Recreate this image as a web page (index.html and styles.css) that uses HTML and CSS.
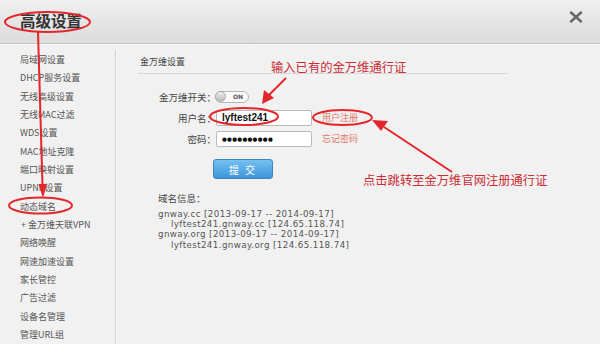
FILE: index.html
```html
<!DOCTYPE html>
<html lang="zh-CN">
<head>
  <meta charset="UTF-8">
  <title>高级设置</title>
  <link rel="stylesheet" href="styles.css">
</head>
<body>
  <div id="dialog">
    <div id="header">
      <h1>高级设置</h1>
      <svg class="close" width="14" height="12" viewBox="0 0 14 12">
        <path d="M2 1.5 L12 10.5 M12 1.5 L2 10.5" stroke="#666" stroke-width="2.4" stroke-linecap="round"/>
      </svg>
    </div>

    <div id="content">
      <ul id="menu">
        <li>局域网设置</li>
        <li>DHCP服务设置</li>
        <li>无线高级设置</li>
        <li>无线MAC过滤</li>
        <li>WDS设置</li>
        <li>MAC地址克隆</li>
        <li>端口映射设置</li>
        <li>UPNP设置</li>
        <li class="active">动态域名</li>
        <li class="sub">+ 金万维天联VPN</li>
        <li>网络唤醒</li>
        <li>网速加速设置</li>
        <li>家长管控</li>
        <li>广告过滤</li>
        <li>设备名管理</li>
        <li>管理URL组</li>
      </ul>

      <div id="main">
        <div class="section-title">金万维设置</div>

        <div class="form">
          <label>金万维开关：</label>
          <div class="toggle"><span class="knob"></span><span class="on">ON</span></div>
          <span></span>

          <label>用户名：</label>
          <div class="field user">lyftest241</div>
          <a class="link">用户注册</a>

          <label>密码：</label>
          <div class="field pass">●●●●●●●●●●</div>
          <a class="link">忘记密码</a>
        </div>

        <button id="submitBtn">提 交</button>

        <div class="domains">
          <div class="domain-label">域名信息：</div>
          <div class="domain-list">
            <div>gnway.cc [2013-09-17 -- 2014-09-17]</div>
            <div class="indent">lyftest241.gnway.cc [124.65.118.74]</div>
            <div>gnway.org [2013-09-17 -- 2014-09-17]</div>
            <div class="indent">lyftest241.gnway.org [124.65.118.74]</div>
          </div>
        </div>
      </div>
    </div>

    <!-- red notes drawn over the screenshot -->
    <svg id="notes" width="600" height="344" viewBox="0 0 600 344">
      <g fill="none" stroke="#e3262b" stroke-width="2">
        <ellipse cx="47.5" cy="22" rx="42.5" ry="10"/>
        <ellipse cx="40.5" cy="205.5" rx="31.5" ry="8"/>
        <ellipse cx="244" cy="116.5" rx="34" ry="8.5"/>
        <ellipse cx="342.5" cy="117.5" rx="29.5" ry="7.5"/>
        <path d="M38 32 L42.5 186"/>
        <path d="M286 78 L268 96"/>
        <path d="M452 172 L384 127"/>
      </g>
      <g fill="#e3262b">
        <path d="M38.5 184 L47 184 L43 198 Z"/>
        <path d="M262 104 L264 90 L274 98 Z"/>
        <path d="M372 120 L388 121 L381 131 Z"/>
      </g>
      <text x="271" y="72" class="note">输入已有的金万维通行证</text>
      <text x="363" y="185" class="note">点击跳转至金万维官网注册通行证</text>
    </svg>
  </div>
</body>
</html>
```

FILE: styles.css
```css
body {
  margin: 0;
  font-family: "Noto Sans CJK SC", sans-serif;
  background-color: #f1f1f1;
  color: #555;
  overflow: hidden;
}
#dialog {
  position: relative;
  width: 600px;
  height: 344px;
}
#header {
  height: 43px;
  display: flex;
  align-items: center;
  justify-content: space-between;
  padding: 0 17px 0 20px;
  background: linear-gradient(to bottom, #efefef, #dcdcdc);
  border-bottom: 1px solid #c4c4c4;
  box-shadow: 0 1px 0 #fafafa;
}
#header h1 {
  margin: 0 0 4px;
  font-size: 15.5px;
  font-weight: bold;
  color: #333;
  line-height: 20px;
}
.close {
  margin-bottom: 10px;
}
#content {
  display: flex;
}
#menu {
  list-style: none;
  margin: 6px 0 0;
  padding: 1px 0 0 20px;
  width: 95px;
  height: 294px;
  border-right: 1px solid #cfcfcf;
  box-shadow: 1px 0 0 #fbfbfb;
}
#menu li {
  height: 18.33px;
  line-height: 18.33px;
  font-size: 9px;
  color: #555;
  white-space: nowrap;
}
#menu li.sub {
  padding-left: 1px;
}
#main {
  padding-left: 22px;
  width: 370px;
}
.section-title {
  margin-top: 11px;
  padding: 0 0 4px 2px;
  font-size: 9px;
  line-height: 14px;
  color: #444;
  border-bottom: 1px solid #d8d8d8;
}
.form {
  display: grid;
  grid-template-columns: 78px 96px auto;
  grid-auto-rows: 21px;
  align-items: center;
  margin-top: 12px;
}
.form label {
  text-align: right;
  font-size: 9.5px;
  color: #444;
}
.toggle {
  width: 32px;
  height: 10px;
  border: 1px solid #b5b5b5;
  border-radius: 6px;
  background: #fafafa;
  display: flex;
  align-items: center;
  justify-content: space-between;
  margin-left: -1px;
}
.knob {
  width: 11px;
  height: 11px;
  border-radius: 50%;
  background: linear-gradient(to bottom, #eee, #bbb);
  border: 1px solid #aaa;
  margin-left: -1px;
  box-sizing: border-box;
}
.on {
  font-family: "DejaVu Sans", sans-serif;
  font-size: 6px;
  font-weight: bold;
  color: #555;
  margin-right: 5px;
}
.field {
  height: 16px;
  box-sizing: border-box;
  border: 1px solid #b9b9b9;
  border-radius: 2px;
  background: #fff;
  padding-left: 5px;
  line-height: 14px;
  color: #111;
}
.field.user {
  font-family: "Liberation Sans", sans-serif;
  font-weight: bold;
  font-size: 10px;
}
.field.pass {
  font-family: "DejaVu Sans", sans-serif;
  font-size: 5.5px;
  letter-spacing: 0.3px;
}
.link {
  margin-left: 10px;
  font-size: 9px;
  color: #e07a6a;
}
#submitBtn {
  display: block;
  margin: 10px 0 0 75px;
  width: 60px;
  height: 20px;
  padding: 0;
  border: 1px solid #3a86c4;
  border-radius: 3px;
  background: linear-gradient(to bottom, #74c2f2, #3f95d8);
  color: #fff;
  font-family: "Noto Sans CJK SC", sans-serif;
  font-size: 10px;
  letter-spacing: 2px;
}
.domains {
  padding-left: 20px;
  margin-top: 13px;
}
.domain-label {
  font-size: 9.5px;
  line-height: 12px;
  color: #444;
}
.domain-list {
  margin-top: 5px;
  font-family: "DejaVu Sans", sans-serif;
  font-size: 8.7px;
  line-height: 10.2px;
  letter-spacing: 0.4px;
  color: #555;
}
.domain-list .indent {
  padding-left: 13px;
}
#notes {
  position: absolute;
  top: 0;
  left: 0;
  pointer-events: none;
}
.note {
  font-family: "Noto Sans CJK SC", sans-serif;
  font-size: 12.3px;
  fill: #cc2c33;
}
```
